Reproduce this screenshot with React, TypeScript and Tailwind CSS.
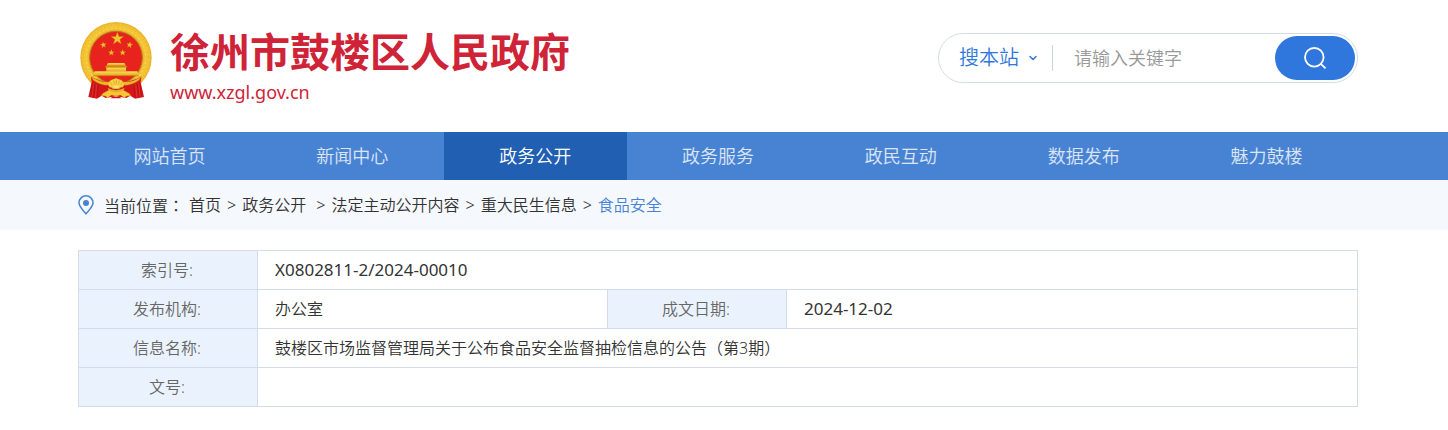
import React from 'react'
import { ChevronDown } from 'lucide-react'

const NAV_ITEMS = ['网站首页', '新闻中心', '政务公开', '政务服务', '政民互动', '数据发布', '魅力鼓楼']
const ACTIVE_ITEM = '政务公开'

const CRUMBS = ['首页', '政务公开\u00a0', '法定主动公开内容', '重大民生信息', '食品安全']

const STAR = '0,-10 2.4,-3.1 9.5,-3.1 3.8,1.2 5.9,8.1 0,3.9 -5.9,8.1 -3.8,1.2 -9.5,-3.1 -2.4,-3.1'

function Container({ className = '', children }: { className?: string; children: React.ReactNode }) {
  return (
    <div className="pr-3">
      <div className={`mx-auto max-w-7xl ${className}`}>{children}</div>
    </div>
  )
}

function Emblem() {
  return (
    <svg className="h-[77px] w-[73px] shrink-0" viewBox="30 20 219 231" aria-hidden="true">
      <defs>
        <radialGradient id="gold" gradientUnits="userSpaceOnUse" cx="138" cy="127" r="108">
          <stop offset="0.7" stopColor="#dca022" />
          <stop offset="0.8" stopColor="#f3c436" />
          <stop offset="0.93" stopColor="#f4c433" />
          <stop offset="1" stopColor="#e2a822" />
        </radialGradient>
        <linearGradient id="gate" x1="0" y1="0" x2="0" y2="1">
          <stop offset="0" stopColor="#fbe052" />
          <stop offset="1" stopColor="#e5a622" />
        </linearGradient>
      </defs>

      {/* Wreath */}
      <circle cx="138" cy="127" r="107" fill="url(#gold)" />
      <circle cx="138" cy="127" r="99" fill="none" stroke="#d99c1c" strokeOpacity="0.4" strokeWidth="4" strokeDasharray="3 8" />
      <circle cx="138" cy="127" r="89" fill="none" stroke="#fde26a" strokeOpacity="0.5" strokeWidth="4" strokeDasharray="6 7" />
      <circle cx="138" cy="127" r="79" fill="#e8231d" stroke="#b97a16" strokeWidth="3" />

      {/* Stars */}
      <g fill="#f4c52f" stroke="#b8780f" strokeWidth="0.6">
        <polygon points={STAR} transform="translate(142 70) scale(2)" />
        <polygon points={STAR} transform="translate(100 89) rotate(-10)" />
        <polygon points={STAR} transform="translate(179 89) rotate(10)" />
        <polygon points={STAR} transform="translate(124 112)" />
        <polygon points={STAR} transform="translate(158 112)" />
      </g>

      {/* Gate tower */}
      <path d="M114 143h49l5 8h-59z" fill="url(#gate)" />
      <path d="M105 152h67l-3 6h-61z" fill="#cb8c17" />
      <path d="M109 157h59v11h-59z" fill="url(#gate)" />
      <path d="M74 168h128l4 13H68z" fill="url(#gate)" />
      <path d="M70 181h135" stroke="#c98a1a" strokeWidth="2" />

      {/* Drapery */}
      <path d="M63 184q34 18 75 20 41-2 76-20l-2 17 10 44-27 5-14-9-12 7-31-5-31 5-12-7-14 9-26-5 10-44z" fill="#d5171a" />
      <path d="M67 203l-4 40M75 206l-5 41M85 210l-3 35M209 203l5 40M202 206l5 41M192 210l3 35" stroke="#a31013" strokeWidth="2" />
      <path d="M71 205l-5 38M80 208l-4 38M206 205l4 38M197 208l4 38" stroke="#ea3a32" strokeWidth="2" />

      {/* Cog wheel and ribbon */}
      <path d="M64 184q30 19 54 15l20-9 20 9q27 4 55-15l-6 11q-24 17-47 14l-12 11h-20l-12-11q-23 3-46-14z" fill="#efb829" stroke="#b97c16" strokeWidth="1" />
      <path d="M113 206l9-11 16-6 17 6 9 11-6 10H119z" fill="#f8d345" stroke="#c98c1c" strokeWidth="1" />
      <path d="M126 209l-5-8M133 206l-2-10M139 205v-11M146 206l2-10M152 209l5-8" stroke="#cf941f" strokeWidth="2" />
      <ellipse cx="138" cy="214" rx="12" ry="6" fill="#fbe067" stroke="#d0941f" strokeWidth="1" />
      <path d="M113 218q25 13 51 0l-8 14q-18 8-36 0z" fill="#eeb52a" />
      <path d="M117 224l-18 10-6 7 14 1 5 6 13-9q13 6 26 0l13 9 5-6 14-1-6-7-18-10q-21 10-42 0z" fill="#f5c637" stroke="#c4861a" strokeWidth="1" />
      <path d="M129 243q9 3 18 0l7 6h-32z" fill="#d5171a" />
    </svg>
  )
}

function SearchBox() {
  return (
    <form
      className="flex h-[50px] w-[420px] items-center rounded-full border border-[#d3dde9] pr-0.5 pl-5"
      onSubmit={(e) => e.preventDefault()}
    >
      <div className="relative shrink-0">
        <select aria-label="搜索范围" className="w-20 appearance-none bg-transparent text-xl text-[#2f77dc] outline-none">
          <option>搜本站</option>
        </select>
        <ChevronDown className="pointer-events-none absolute top-1/2 right-0 size-3 -translate-y-1/2 text-[#2f77dc]" strokeWidth={3} />
      </div>
      <span className="ml-[13px] h-[26px] w-px shrink-0 bg-[#cfd4da]" />
      <input
        type="text"
        aria-label="请输入关键字"
        placeholder="请输入关键字"
        className="min-w-0 flex-1 px-[21px] text-lg text-[#333] outline-none placeholder:text-[#999]"
      />
      <button type="submit" aria-label="搜索" className="flex h-11 w-20 shrink-0 items-center justify-center rounded-full bg-[#2f77dc] text-white">
        <svg className="size-6" viewBox="0 0 24 24" fill="none" stroke="currentColor" strokeWidth="1.8">
          <circle cx="11.3" cy="11.3" r="9.3" />
          <path d="M17.6 17.6l4.9 4.8" />
        </svg>
      </button>
    </form>
  )
}

function LabelCell({ children }: { children: React.ReactNode }) {
  return <th scope="row" className="border border-[#d3dde9] bg-[#eaf3fd] pr-0.5 font-[350] text-[#666]">{children}</th>
}

function ValueCell({ colSpan, children }: { colSpan?: number; children?: React.ReactNode }) {
  return <td colSpan={colSpan} className="border border-[#d3dde9] px-[17px] text-[#333]">{children}</td>
}

export default function App() {
  return (
    <div className="bg-white font-['Noto_Sans','Noto_Sans_CJK_SC',sans-serif] font-[350]">
      <header>
        <Container className="flex h-[132px] items-start justify-between">
          <a href="#" className="flex gap-[17px] pt-[22px] pl-0.5 text-[#cf2338]">
            <Emblem />
            <div className="pt-0.5">
              <h1 className="text-[40px] leading-[56px] font-bold">徐州市鼓楼区人民政府</h1>
              <p className="text-lg leading-6 font-normal">www.xzgl.gov.cn</p>
            </div>
          </a>
          <div className="pt-[33px]">
            <SearchBox />
          </div>
        </Container>
      </header>

      <nav className="bg-[#4883d3]">
        <Container className="flex">
          {NAV_ITEMS.map((item) => (
            <a
              key={item}
              href="#"
              className={`flex-1 text-center text-lg leading-[48px] ${
                item === ACTIVE_ITEM ? 'bg-[#215fb3] text-white' : 'text-white/80'
              }`}
            >
              {item}
            </a>
          ))}
        </Container>
      </nav>

      <div className="bg-[#f5f8fd]">
        <Container className="flex h-[50px] items-center text-base text-[#333]">
          <svg className="mr-2.5 h-5 w-4" viewBox="0 0 16 20" fill="none" aria-hidden="true">
            <path d="M8 18.8C5.6 15.9 1 11.8 1 7.8a7 7 0 0 1 14 0c0 4-4.6 8.1-7 11z" stroke="#4883d3" strokeWidth="1.5" />
            <circle cx="8" cy="8" r="3" fill="#4883d3" />
          </svg>
          <span className="mr-[5px]">
            当前位置<span className="font-['Noto_Sans_CJK_TC',sans-serif]" lang="zh-TW">：</span>
          </span>
          <div className="flex items-center gap-[6px]">
            {CRUMBS.map((crumb, index) => (
              <React.Fragment key={crumb}>
                {index > 0 && <span>&gt;</span>}
                <a href="#" className={index === CRUMBS.length - 1 ? 'text-[#4883d3]' : ''}>
                  {crumb}
                </a>
              </React.Fragment>
            ))}
          </div>
        </Container>
      </div>

      <main>
        <Container className="pt-5">
          <table className="w-full table-fixed border-collapse text-base">
            <colgroup>
              <col className="w-[179px]" />
              <col className="w-[350px]" />
              <col className="w-[179px]" />
              <col />
            </colgroup>
            <tbody>
              <tr className="h-[39px]">
                <LabelCell>索引号:</LabelCell>
                <ValueCell colSpan={3}>
                  <span className="text-[17px] font-normal">X0802811-2/2024-00010</span>
                </ValueCell>
              </tr>
              <tr className="h-[39px]">
                <LabelCell>发布机构:</LabelCell>
                <ValueCell>办公室</ValueCell>
                <LabelCell>成文日期:</LabelCell>
                <ValueCell>
                  <span className="text-[17px] font-normal">2024-12-02</span>
                </ValueCell>
              </tr>
              <tr className="h-[39px]">
                <LabelCell>信息名称:</LabelCell>
                <ValueCell colSpan={3}>鼓楼区市场监督管理局关于公布食品安全监督抽检信息的公告（第3期）</ValueCell>
              </tr>
              <tr className="h-[39px]">
                <LabelCell>文号:</LabelCell>
                <ValueCell colSpan={3} />
              </tr>
            </tbody>
          </table>
        </Container>
      </main>
    </div>
  )
}
